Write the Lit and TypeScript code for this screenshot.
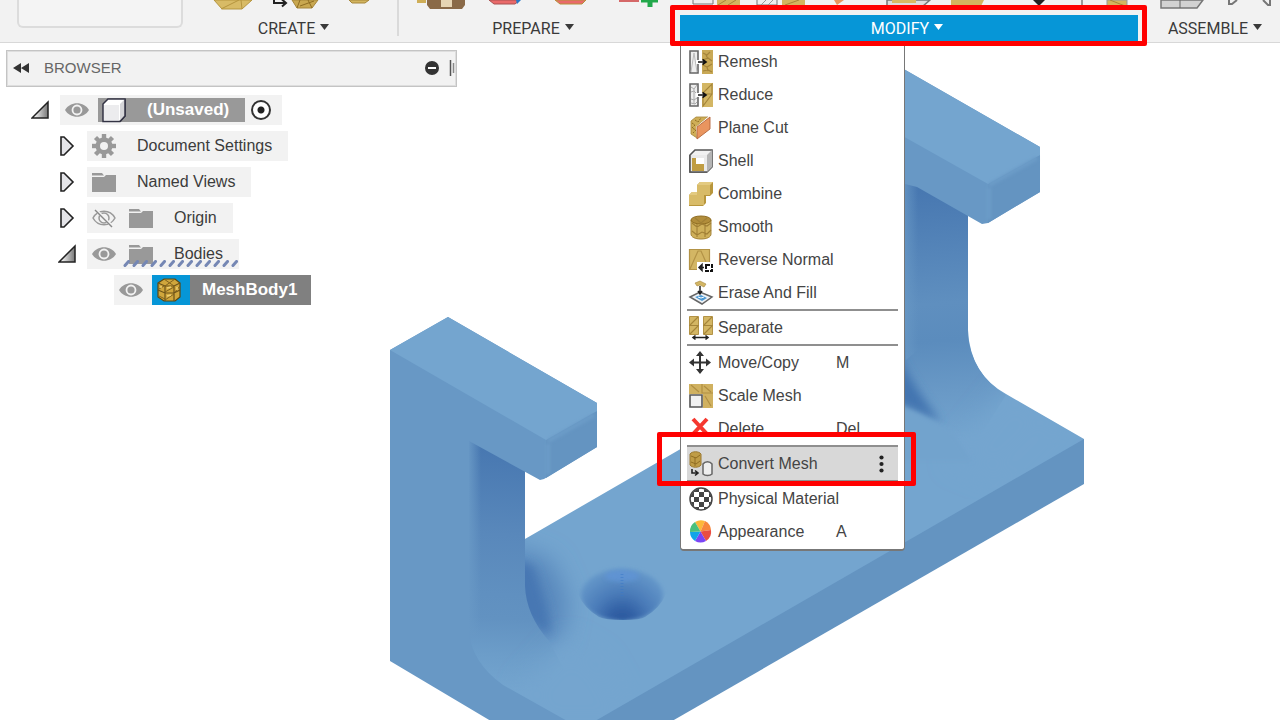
import { LitElement, html, svg, css, nothing } from "lit";
import { customElement, property } from "lit/decorators.js";
import { classMap } from "lit/directives/class-map.js";

const G = "#d3b664";
const D = "#a5853a";

const icons: Record<string, unknown> = {
  remesh: svg`<path d="M1 1h8v22H1z" fill="#eee" stroke="#666" stroke-width="1.6"/><path d="M2 22 5 3l3 19" fill="none" stroke="#bbb"/>
    <path d="M13 0h11v24H13z" fill="#c9a956"/><path d="m14 3 4 2 3-3m-7 8 5-2 4 3m-9 4 4 2 5-3m-9 7 5-1 4 2M17 5l2 4m-1 8 1 4" fill="none" stroke="${D}" stroke-width="1.2"/>
    <path d="M7 10h8v4H7z" fill="#fff"/><path d="M9 12h7m-2.500-2.500L17 12l-3.500 2.500" fill="none" stroke="#111" stroke-width="1.600"/>`,
  reduce: svg`<path d="M1 1h8v22H1z" fill="#eee" stroke="#666" stroke-width="1.6"/><path d="m2 4 3 2 3-4M2 9l3-1 3 3M2 16l3 1 3-2M2 20l4 1 2-2M5 6v15" fill="none" stroke="#aaa"/>
    <path d="M13 0h11v24H13z" fill="${G}"/><path d="M14 10 23 1v10l-9 12V13zM14 11h9" fill="none" stroke="${D}" stroke-width="1.1"/>
    <path d="M7 10h8v4H7z" fill="#fff"/><path d="M9 12h7m-2.500-2.500L17 12l-3.500 2.500" fill="none" stroke="#111" stroke-width="1.600"/>`,
  planecut: svg`<path d="M2 5 7 1h12l-4 3-7 6v12l-6-4z" fill="#cfae57" stroke="#a5853a" stroke-width=".8"/><path d="M3 7l3 2-3 3 4 2-3 3M6 4l3 2 3-4" fill="none" stroke="#8f6d22" stroke-dasharray="2 1"/>
    <path d="M7 11 20 0v14L8 24z" fill="#fff"/><path d="M8 11 21 1v12L8 23z" fill="#e9955f" stroke="#b4653a" stroke-width=".9"/>`,
  shell: svg`<path d="M1 6 6 1h17v17l-5 5H1z" fill="#f1f1f1" stroke="#555" stroke-width="1.6"/><path d="M18 6v17l5-5V1z" fill="#b4b4b4"/><path d="M1 6h17v17H1z" fill="#eaeaea"/><path d="M1 6v17h17" fill="none" stroke="#555" stroke-width="1.6"/><path d="M4 9h11v11H4z" fill="#fff"/><path d="M3 9h4v6h8v7H3z" fill="#c09d43"/>`,
  combine: svg`<path d="M8 3l3-3h13v11l-3 3h-4v7l-3 3H0V13l3-3h5z" fill="#b8963c"/><path d="M8 3h13v10h-6v10H0V13h8z" fill="#d8bb68"/><path d="m21 3 3-3H11L8 3zM0 13l3-3h5v3z" fill="#e3ca80"/>`,
  smooth: svg`<path d="M2 5v14c0 3 4 5 10 5s10-2 10-5V5z" fill="#cfb05a" stroke="#a5853a"/><ellipse cx="12" cy="5" rx="10" ry="4" fill="#b18d3b" stroke="#8f6d22"/><path d="m6 3 6 5 6-5M3 8l5 4 5-3 5 2 4-3M3 16l5 4 5-3 5 2 4-4M8 9v13m8-13v13" fill="none" stroke="#a07f35" stroke-width="1.1"/>`,
  reverse: svg`<path d="M0 1h21v21H0z" fill="${G}"/><path d="M.5 1.500h20v20H.5zM1 21 9 3h3l8 18" fill="none" stroke="#b39346" stroke-width="1.2"/><path d="M8 14h16v10H8z" fill="#fff"/><path d="M15 19.500h-4m2-3-3 3 3 3z" stroke="#222" stroke-width="1.500" fill="#222"/><path d="M17 17h6v6h-6z" fill="none" stroke="#111" stroke-width="2" stroke-dasharray="4 1"/>`,
  erase: svg`<path d="m1 16 10-5 12 5-10 7z" fill="#eef2f6" stroke="#666" stroke-width="1.500"/><path d="m6 16 6-2 6 3-5 3z" fill="#4e9ad3"/><path d="m9 16 3 1 3-1" stroke="#fff" fill="none"/><path d="m6 2 5-2 6 3-2 3-4-2-3 1z" fill="${G}" stroke="${D}" stroke-width=".6"/><path d="M11 5v7m-2-2 2 3 2-3" fill="none" stroke="#222" stroke-width="1.500"/>`,
  separate: svg`<path d="M.5.5h9v18h-9zM14.500.5h9v18h-9z" fill="${G}" stroke="#b39346"/><path d="M1 9 9 1M1 18l8-8M0 9.500h10m5-.5 8-8m-8 17 8-8m-9-.5h10" fill="none" stroke="${D}" stroke-width="1.100"/><path d="M4 21.500h15M6.500 19.500 4 21.500l2.500 2m10-4 2.500 2-2.500 2" fill="none" stroke="#222" stroke-width="1.600"/>`,
  move: svg`<path d="M11 3v18M3 11.500h17" stroke="#333" stroke-width="2"/><path d="m11 0 4 5H7zm0 23 4-5H7zM0 11.500l5-4v8zm22 0-5-4v8z" fill="#333"/>`,
  scale: svg`<path d="M0 0h24v24H14V10H0z" fill="#d0b160"/><path d="m2 1 8 7m5-6 7 6M13 0v9h11M16 12l6 10" fill="none" stroke="#b08f42" stroke-width="1.2"/><path d="M1 11h12v12H1z" fill="#f1f1f1" stroke="#555" stroke-width="1.600"/>`,
  delete: svg`<path d="m4 2 14 15M18 2 4 17" stroke="#f5382f" stroke-width="4"/>`,
  convert: svg`<path d="M1 2c2-3 9-3 11 0v11c-2 3-9 3-11 0z" fill="#bf9c46" stroke="#9a7930"/><path d="m2 4 5 2 4-3M2 10l5 2 4-3M6 5v9" fill="none" stroke="#8f6d22"/><path d="M3 17v4h5m-2-2.500L9 21l-3 2.500" fill="none" stroke="#222" stroke-width="1.600"/><path d="M14 12c2-3 7-3 9 0v10c-2 2-7 2-9 0z" fill="#eee" stroke="#666" stroke-width="1.500"/>`,
  physical: svg`<defs><clipPath id="ball"><circle cx="12" cy="12" r="10.500"/></clipPath></defs><circle cx="12" cy="12" r="11" fill="#fff"/><path clip-path="url(#ball)" fill="#444" d="M5 0h5v5H5zM15 0h5v5h-5zM0 5h5v5H0zM10 5h5v5h-5zM20 5h5v5h-5zM5 10h5v5H5zM15 10h5v5h-5zM0 15h5v5H0zM10 15h5v5h-5zM20 15h5v5h-5zM5 20h5v5H5zM15 20h5v5h-5z"/><circle cx="12" cy="12" r="11" fill="none" stroke="#444" stroke-width="1.500"/>`,
  appearance: svg`<path d="M11.500 11.500 6 2a11 11 0 0 1 10-1z" fill="#fdb73a"/><path d="M11.500 11.500 16 1a11 11 0 0 1 6 9z" fill="#f7863d"/><path d="M11.500 11.500 22 10a11 11 0 0 1-5 11z" fill="#ea4d43"/><path d="M11.500 11.500 17 21a11 11 0 0 1-11 0z" fill="#7a45f5"/><path d="M11.500 11.500 6 21a11 11 0 0 1-5-9z" fill="#12a5e8"/><path d="M11.500 11.500 1 12A11 11 0 0 1 6 2z" fill="#4bc07c"/>`,
  eye: svg`<path d="M0 12C5 3 19 3 24 12 19 21 5 21 0 12z" fill="#999"/><circle cx="12" cy="12" r="4.500" fill="none" stroke="#f2f2f2" stroke-width="1.800"/>`,
  eyeoff: svg`<path d="M1 12C6 3 18 3 23 12 18 21 6 21 1 12z" fill="none" stroke="#999" stroke-width="1.500"/><circle cx="12" cy="12" r="5" fill="none" stroke="#999" stroke-width="1.500"/><path d="m4 4 17 17" stroke="#f2f2f2" stroke-width="3"/><path d="m3 4 17 17" stroke="#888" stroke-width="1.400"/>`,
  folder: svg`<path d="M0 3h10l2 2.500H0zM0 7h12l2-2h10v17H0z" fill="#999"/>`,
  gear: svg`<g fill="#999"><circle cx="12" cy="12" r="8.500"/>${[0, 45, 90, 135].map((a) => svg`<path d="M9.800 0h4.400v24H9.800z" transform="rotate(${a} 12 12)"/>`)}</g><circle cx="12" cy="12" r="4" fill="#f2f2f2"/>`,
  cube: svg`<path d="M1 6 6 1h17v17l-5 5.500H1z" fill="#fff" stroke="#334" stroke-width="1.500"/><path d="M18 6v17l5-5V1z" fill="#d5d5d8"/><path d="M2 7h15v15H2z" fill="#ececee"/><path d="M23 1v17l-5 5.500" fill="none" stroke="#334" stroke-width="1.500"/>`,
  mesh: svg`<path d="M1 5 7 1h11l5 4v14l-5 4H7l-6-4z" fill="#d0a63c" stroke="#5d460f" stroke-width="1.200"/><path d="m1 5 7 3h9l6-3M8 8v15m9-15v15M1 12l7 3h9l6-3M8 8" fill="none" stroke="#6d5318" stroke-width="1.200"/><path d="m8 14 9-5M2 11l5-3M8 22l9-6m1-2 5-6M7 1l10 7M18 1 8 8M2 18l6 3" fill="none" stroke="#80621e" stroke-width="1"/><path d="m10 10 4-1M4 8v2m16-1v3M10 18l4-1" stroke="#f0d070" stroke-width="1.500"/>`,
};

const icon = (name: string) =>
  html`<svg class="icon" width="24" height="24" viewBox="0 0 24 24" aria-hidden="true">${icons[name]}</svg>`;

const iconCss = css`
  .icon {
    display: block;
    flex: none;
    overflow: visible;
  }
  button {
    font: inherit;
    color: inherit;
    background: none;
    border: 0;
    padding: 0;
    margin: 0;
    text-align: left;
  }
  ul {
    list-style: none;
    margin: 0;
    padding: 0;
  }
`;

interface MenuEntry {
  label: string;
  icon: string;
  key?: string;
  rule?: boolean;
  active?: boolean;
}

const entries: MenuEntry[] = [
  { label: "Remesh", icon: "remesh" },
  { label: "Reduce", icon: "reduce" },
  { label: "Plane Cut", icon: "planecut" },
  { label: "Shell", icon: "shell" },
  { label: "Combine", icon: "combine" },
  { label: "Smooth", icon: "smooth" },
  { label: "Reverse Normal", icon: "reverse" },
  { label: "Erase And Fill", icon: "erase" },
  { label: "Separate", icon: "separate", rule: true },
  { label: "Move/Copy", icon: "move", key: "M", rule: true },
  { label: "Scale Mesh", icon: "scale" },
  { label: "Delete", icon: "delete", key: "Del" },
  { label: "Convert Mesh", icon: "convert", rule: true, active: true },
  { label: "Physical Material", icon: "physical", rule: true },
  { label: "Appearance", icon: "appearance", key: "A" },
];

@customElement("modify-menu")
export class ModifyMenu extends LitElement {
  static styles = [
    iconCss,
    css`
      :host {
        display: block;
        box-sizing: border-box;
        width: 225px;
        padding: 2px 6px 1px;
        background: #fff;
        border: 1px solid #777;
        border-bottom-width: 2px;
        border-radius: 0 0 4px 4px;
        font: 16px/20px "Liberation Sans", Arial, sans-serif;
        color: #444;
      }
      .entry {
        position: relative;
      }
      .rule {
        border-top: 2px solid #8f8f8f;
      }
      .command {
        display: grid;
        grid-template-columns: 29px 118px 1fr;
        align-items: center;
        width: 100%;
        height: 33px;
        padding-left: 2px;
        white-space: nowrap;
      }
      .active .command {
        background: #d8d8d8;
      }
      .more {
        justify-self: end;
        grid-column: 3;
        margin-right: 14px;
      }
      .marker {
        position: absolute;
        inset: -15px -18px -6px -30px;
        border: 5px solid #f00;
        border-radius: 2px;
        pointer-events: none;
        z-index: 1;
      }
    `,
  ];

  render() {
    return html`<ul>
      ${entries.map(
        (e) => html`<li class=${classMap({ entry: true, rule: !!e.rule, active: !!e.active })}>
          <button class="command">
            ${icon(e.icon)}<span>${e.label}</span>
            ${e.key ? html`<span>${e.key}</span>` : nothing}
            ${e.active
              ? html`<svg class="more" width="5" height="18" viewBox="0 0 5 18" aria-hidden="true">
                  <g fill="#222"><circle cx="2.5" cy="2.500" r="2.100" /><circle cx="2.5" cy="9" r="2.100" /><circle cx="2.5" cy="15.500" r="2.100" /></g>
                </svg>`
              : nothing}
          </button>
          ${e.active ? html`<div class="marker"></div>` : nothing}
        </li>`
      )}
    </ul>`;
  }
}

const strips = {
  create: svg`
    <path d="M214 0h38l-10 9h-20z" fill="#d8bb66" stroke="#b5953f"/><path d="m221 9 18-9M242 9l-1-9" stroke="#b5953f" fill="none"/>
    <path d="M274 0v3h11m-3-3.500 4 3.500-4 3.500" fill="none" stroke="#222" stroke-width="2"/>
    <path d="M292 0h26l-6 8h-15z" fill="#c9a850" stroke="#a5853a"/><path d="m297 8 3-8m12 8-4-8m-8 6 14-5" stroke="#8f6d22" fill="none"/>
    <path d="M349 0h20l-4 3h-13z" fill="#d3b55f" stroke="#a5853a"/>`,
  prepare: svg`
    <path d="M417 0h9v3h-9z" fill="#cfae57"/><path d="M427 0h38v5l-3 4h-32l-3-4z" fill="#8a6a48"/><path d="M441 0h11v7h-11z" fill="#e6d5b4"/>
    <path d="M489 0h31l-5 4h-21z" fill="#ea6a6a" stroke="#a85050"/><path d="M516 0h5l-4 4z" fill="#2a79c5"/>
    <path d="M555 0h31l-4 4h-22z" fill="#ea6a6a" stroke="#b5913b"/>
    <path d="M619 1h20" stroke="#d56868" stroke-width="2"/><path d="M641 0h17M650 0v7" stroke="#22a84b" stroke-width="5"/>`,
  modify: svg`
    <path d="M693 0v4h20V0" fill="#eee" stroke="#777"/><path d="M717 0h23v6h-23z" fill="#d3b55f"/><path d="m718 5 8-5m2 5 8-5" stroke="#a5853a"/>
    <path d="M757 0v5h20V0" fill="#eee" stroke="#777"/><path d="m761 5 5-5m2 5 5-5" stroke="#999"/><path d="M782 0h23v6h-23z" fill="#d3b55f"/><path d="m785 5 14-5" stroke="#a5853a"/>
    <path d="M834 0h10l-7 5z" fill="#e9955f"/><path d="M887 0v6h36l7-6z" fill="#ddd" stroke="#777" stroke-width="1.500"/><path d="M892 0h24v3h-24z" fill="#d8ba64"/>
    <path d="M951 0h33l-3 6h-30z" fill="#d3b55f"/><path d="M1033 0h12l-6 6z" fill="#222"/><path d="M1082 0v6" stroke="#444"/>
    <path d="M1107 0h20v6h-20z" fill="#d3b55f" stroke="#999"/><path d="m1110 0 15 6" stroke="#a5853a"/>`,
  assemble: svg`
    <path d="M1161 0v8h36l6-8z" fill="#d2d2d2" stroke="#777" stroke-width="1.500"/><path d="M1180 0v8" stroke="#666"/>
    <path d="M1229 0v4h3l5-4m26 0 5 5h2V0" fill="none" stroke="#777" stroke-width="2"/>`,
};

@customElement("tool-group")
export class ToolGroup extends LitElement {
  @property() label = "";
  @property() strip: keyof typeof strips = "create";
  @property() box = "";
  @property({ type: Boolean, reflect: true }) open = false;

  static styles = [
    iconCss,
    css`
      :host {
        display: flex;
        flex-direction: column;
        align-items: center;
        position: relative;
        font: 16px/24px Roboto, sans-serif;
        color: #3a3a3a;
      }
      .strip {
        display: block;
        height: 15px;
      }
      .title {
        display: flex;
        justify-content: center;
        gap: 5px;
        height: 26px;
        padding-top: 2px;
      }
      .caret {
        margin-top: 7px;
      }
      :host([open]) .title {
        align-self: stretch;
        margin: 0 9px 0 10px;
        padding-right: 4px;
        background: #0696d7;
        color: #fff;
      }
      .menu {
        position: absolute;
        top: 42px;
        left: 10px;
        z-index: 2;
      }
      .marker {
        position: absolute;
        inset: 5px 0 -4px;
        border: 5px solid #f00;
        border-radius: 2px;
        pointer-events: none;
        z-index: 3;
      }
    `,
  ];

  render() {
    const [x, w] = this.box.split(" ");
    return html`<svg class="strip" width=${w} height="15" viewBox="${x} 0 ${w} 15" aria-hidden="true">${strips[this.strip]}</svg>
      <button class="title">
        ${this.label}<svg class="caret" width="9" height="8" viewBox="0 0 9 8" aria-hidden="true"><path d="M0 0h9L4.500 6z" fill="currentColor" /></svg>
      </button>
      ${this.open ? html`<modify-menu class="menu"></modify-menu><div class="marker"></div>` : nothing}`;
  }
}

interface Node {
  label: string;
  level: number;
  open?: boolean;
  leaf?: boolean;
  icons: string[];
  kind?: "root" | "selected" | "dashed";
}

const nodes: Node[] = [
  { label: "(Unsaved)", level: 0, open: true, icons: ["eye", "cube"], kind: "root" },
  { label: "Document Settings", level: 1, icons: ["gear"] },
  { label: "Named Views", level: 1, icons: ["folder"] },
  { label: "Origin", level: 1, icons: ["eyeoff", "folder"] },
  { label: "Bodies", level: 1, open: true, icons: ["eye", "folder"], kind: "dashed" },
  { label: "MeshBody1", level: 2, leaf: true, icons: ["eye", "mesh"], kind: "selected" },
];

@customElement("browser-panel")
export class BrowserPanel extends LitElement {
  static styles = [
    iconCss,
    css`
      :host {
        display: block;
        font: 16px/20px "Liberation Sans", Arial, sans-serif;
        color: #3c3c3c;
      }
      .bar {
        display: flex;
        align-items: center;
        box-sizing: border-box;
        width: 451px;
        max-width: 100%;
        height: 37px;
        padding: 0 0 1px 6px;
        border: 1px solid #c4c4c4;
        background: #f2f2f2;
        box-shadow: inset 0 0 0 1px #dedede;
      }
      .heading {
        flex: 1;
        margin: 0 0 0 15px;
        font-size: 15px;
        font-weight: 400;
        color: #666;
      }
      .tree {
        display: grid;
        gap: 6px;
        margin-top: 8px;
      }
      .node {
        display: flex;
        align-items: center;
        height: 30px;
        padding-left: 25px;
      }
      .level1 {
        padding-left: 52px;
      }
      .level2 {
        padding-left: 79px;
      }
      .toggle {
        flex: none;
        width: 29px;
      }
      .toggle svg {
        display: block;
      }
      .chip {
        position: relative;
        display: flex;
        align-items: center;
        gap: 13px;
        height: 30px;
        padding: 0 16px 0 5px;
        background: #f2f2f2;
      }
      .name {
        padding-left: 8px;
      }
      .strong {
        display: flex;
        align-items: center;
        gap: 13px;
        font-size: 17px;
        font-weight: 700;
        color: #fff;
      }
      .root .chip {
        gap: 5px;
        padding-right: 10px;
      }
      .root .strong {
        height: 24px;
        margin-left: 4px;
        padding: 0 16px 0 4px;
        background: #999;
      }
      .selected .chip {
        gap: 9px;
        padding-right: 0;
      }
      .selected .strong {
        height: 30px;
        padding-right: 14px;
        background: #808080;
        gap: 4px;
      }
      .tile {
        display: flex;
        align-items: center;
        height: 30px;
        padding: 0 9px 0 5px;
        background: #0696d7;
      }
      .underline {
        position: absolute;
        left: 36px;
        bottom: 2px;
      }
      .radio {
        appearance: none;
        width: 20px;
        height: 20px;
        margin: 0 1px;
        border: 2px solid #333;
        border-radius: 50%;
        background: radial-gradient(circle, #222 3px, #fff 4px);
      }
    `,
  ];

  private arrow(n: Node) {
    return n.open
      ? html`<svg width="18" height="20" viewBox="0 0 18 20" aria-hidden="true">
          <defs><linearGradient id="t"><stop offset="0.2" stop-color="#eee" /><stop offset="1" stop-color="#777" /></linearGradient></defs>
          <path d="M1 18 17 2v16z" fill="url(#t)" stroke="#222" stroke-width="1.500" />
        </svg>`
      : html`<svg width="18" height="20" viewBox="0 0 18 20" aria-hidden="true">
          <path d="M3 1h3l9 9-9 9H3z" fill="#e4e4e8" stroke="#222" stroke-width="1.600" />
        </svg>`;
  }

  private chip(n: Node) {
    if (n.kind === "root")
      return html`${icon("eye")}<span class="strong">${icon("cube")}<span class="name">${n.label}</span></span
        ><input class="radio" type="radio" name="active" checked aria-label="Activate component" />`;
    if (n.kind === "selected")
      return html`${icon("eye")}<span class="strong"><span class="tile">${icon("mesh")}</span><span class="name">${n.label}</span></span>`;
    return html`${n.icons.map(icon)}<span class="name">${n.label}</span>
      ${n.kind === "dashed"
        ? html`<svg class="underline" width="116" height="7" viewBox="0 0 116 7" aria-hidden="true">
            ${Array.from({ length: 13 }, (_, i) => svg`<path d="M${i * 9 + 2} 5.500l3.500-4" stroke="#7587b4" stroke-width="3" stroke-linecap="round" />`)}
          </svg>`
        : nothing}`;
  }

  render() {
    return html`<div class="bar">
        <button aria-label="Collapse browser">
          <svg width="16" height="10" viewBox="0 0 16 10" aria-hidden="true"><path d="M8 0v10L0 5zm8 0v10L8 5z" fill="#333" /></svg>
        </button>
        <h2 class="heading">BROWSER</h2>
        <svg width="32" height="18" viewBox="0 0 32 18" aria-hidden="true">
          <circle cx="8" cy="9" r="7" fill="#333" /><path d="M4 9h8" stroke="#fff" stroke-width="2" />
          <path d="M26.500 1v16" stroke="#555" stroke-width="1.500" /><path d="M29.500 4v10" stroke="#888" stroke-width="1.500" />
        </svg>
      </div>
      <ul class="tree">
        ${nodes.map(
          (n) => html`<li class="node level${n.level} ${n.kind ?? ""}">
            ${n.leaf ? html`<span class="toggle"></span>` : html`<button class="toggle" aria-label="Toggle ${n.label}">${this.arrow(n)}</button>`}
            <div class="chip">${this.chip(n)}</div>
          </li>`
        )}
      </ul>`;
  }
}

@customElement("model-view")
export class ModelView extends LitElement {
  static styles = css`
    :host,
    svg {
      display: block;
    }
  `;

  render() {
    return html`<svg width="710" height="677" viewBox="380 43 710 677" role="img" aria-label="Mesh bracket model">
      <defs>
        <linearGradient id="wall" gradientUnits="userSpaceOnUse" x1="500" y1="450" x2="485" y2="690">
          <stop offset="0" stop-color="#4878b1" /><stop offset=".35" stop-color="#5988bb" /><stop offset=".6" stop-color="#6090c0" />
          <stop offset=".7" stop-color="#6292c1" /><stop offset=".85" stop-color="#6c9dc9" /><stop offset="1" stop-color="#74a5cf" />
        </linearGradient>
        <linearGradient id="wall2" gradientUnits="userSpaceOnUse" x1="940" y1="190" x2="960" y2="440">
          <stop offset="0" stop-color="#4878b1" /><stop offset=".25" stop-color="#5585b9" /><stop offset=".45" stop-color="#5f8fbf" />
          <stop offset=".6" stop-color="#5b8cbd" /><stop offset=".8" stop-color="#6999c6" /><stop offset="1" stop-color="#74a5cf" />
        </linearGradient>
        <linearGradient id="edge" x1="0" x2="1"><stop offset="0" stop-color="#6898c5" /><stop offset="1" stop-color="#6898c5" stop-opacity="0" /></linearGradient>
        <radialGradient id="bowl" gradientUnits="userSpaceOnUse" cx="622" cy="622" r="54">
          <stop offset="0" stop-color="#28559c" /><stop offset=".25" stop-color="#3362a6" /><stop offset=".55" stop-color="#4b7cb9" /><stop offset="1" stop-color="#6598ca" />
        </radialGradient>
        <filter id="haze" x="-50%" y="-50%" width="200%" height="200%"><feGaussianBlur stdDeviation="12" /></filter>
        <filter id="soft" x="-30%" y="-30%" width="160%" height="160%"><feGaussianBlur stdDeviation="5" /></filter>
        <filter id="line" x="-30%" y="-30%" width="160%" height="160%"><feGaussianBlur stdDeviation="2" /></filter>
        <filter id="seam" filterUnits="userSpaceOnUse" x="380" y="43" width="710" height="677"><feGaussianBlur stdDeviation="1.500" /></filter>
        <clipPath id="back"><path d="M880 120h88v215q4 39 38 60l78 44v60H880z" /></clipPath>
        <clipPath id="floor"><path d="M525 539 640 473V735H460V590h65z" /></clipPath>
        <clipPath id="cup"><path d="M560 550h124v44H666q-6 14-21 23-4 3-22 3t-24-3q-15-9-21-23h-18z" /></clipPath>
      </defs>

      <path d="M525 539 905 319 968 330q2 44 38 64l78 45v20L640 735H520L469 660V590z" fill="#74a5cf" />

      <g clip-path="url(#back)">
        <path d="M880 170h88v165q4 39 38 60l-45 72-81-52z" fill="url(#wall2)" />
        <path d="M1010 385 950 460 1000 480 1060 420z" fill="#74a5cf" filter="url(#haze)" />
        <path d="M896 350q14 32 45 72-20-8-45-20z" fill="#4274b0" filter="url(#soft)" />
        <path d="M890 402q30 10 62 29l20 30h-82z" fill="#72a3cd" filter="url(#line)" />
        <path d="M900 170h18v180l-12 10z" fill="url(#edge)" />
      </g>
      <path d="M860 44 1040 147v45l-52 31-6 1-65-37-12-3-45 20z" fill="#6898c5" />
      <path d="m988 184 52-29v37l-52 31z" fill="#6494c1" />
      <path d="M860 44 1040 147v8l-52 29L860 112z" fill="#74a5cf" />
      <path d="m989 185 48-27M989 188v31" stroke="#6c9cc8" stroke-width="4" filter="url(#seam)" />

      <g clip-path="url(#floor)">
        <path d="M505 545 550 560 568 600 560 640 540 650 505 600z" fill="#5686bb" filter="url(#haze)" />
        <path d="M515 560 533 566 547 610 550 636 515 610z" fill="#4677b3" filter="url(#soft)" />
      </g>
      <path d="M469 430 525 460v126q1 29 24 55l16 30-20 45-80-40z" fill="url(#wall)" />
      <g clip-path="url(#floor)">
        <path d="M565 640 600 660 640 730H540l-20-40z" fill="#74a5cf" filter="url(#haze)" />
      </g>
      <path d="M1084 439v45L660 728h-77z" fill="#6494c1" />
      <path d="M468 438h13v200h-13z" fill="url(#edge)" />

      <g clip-path="url(#cup)">
        <ellipse cx="622" cy="595" rx="41" ry="26" fill="url(#bowl)" filter="url(#line)" />
        <ellipse cx="622" cy="576" rx="17" ry="6" fill="#6094d6" opacity=".8" filter="url(#line)" />
      </g>
      <path d="M622 574v24" stroke="#3978c8" stroke-width="3" stroke-dasharray="1 2" opacity=".5" />

      <path d="M390 350 448 317 597 403v44l-53 32-4 1-71-39v190q2 31 34 54l66 37v8h-63L390 661z" fill="#6898c5" />
      <path d="m546 440 51-29v36l-51 31z" fill="#6494c1" />
      <path d="M390 350 448 317 597 403v8l-51 29z" fill="#74a5cf" />
      <path d="m548 441 46-26M548 444v30" stroke="#6c9cc8" stroke-width="4" filter="url(#seam)" />
    </svg>`;
  }
}

@customElement("app-root")
export class AppRoot extends LitElement {
  static styles = css`
    :host {
      display: flex;
      flex-direction: column;
      height: 100vh;
      overflow: hidden;
      background: #fff;
    }
    .toolbar {
      position: relative;
      z-index: 1;
      display: grid;
      grid-template-columns: 188px 211px 268px minmax(240px, 1fr) 130px;
      height: 42px;
      background: #f2f2f2;
      border-bottom: 1px solid #d8d8d8;
    }
    .workspace {
      height: 28px;
      margin: 0 5px 0 17px;
      padding: 0;
      border: 2px solid #dcdcdc;
      border-top: 0;
      border-radius: 0 0 6px 6px;
      background: #f4f4f4;
    }
    .divided {
      background: linear-gradient(#dadada, #dadada) right top / 2px 36px no-repeat;
    }
    .modify {
      margin-left: 3px;
      margin-right: 3px;
    }
    .stage {
      position: relative;
      flex: 1;
      min-height: 0;
    }
    .model {
      position: absolute;
      top: 0;
      left: 380px;
    }
    .browser {
      position: relative;
      margin: 7px 6px;
    }
  `;

  render() {
    return html`<header class="toolbar">
        <button class="workspace" aria-label="Workspace"></button>
        <tool-group class="divided" label="CREATE" strip="create" box="188 211"></tool-group>
        <tool-group label="PREPARE" strip="prepare" box="399 268"></tool-group>
        <tool-group class="modify" label="MODIFY" strip="modify" box="670 477" open></tool-group>
        <tool-group label="ASSEMBLE" strip="assemble" box="1150 130"></tool-group>
      </header>
      <main class="stage">
        <model-view class="model"></model-view>
        <browser-panel class="browser"></browser-panel>
      </main>`;
  }
}
